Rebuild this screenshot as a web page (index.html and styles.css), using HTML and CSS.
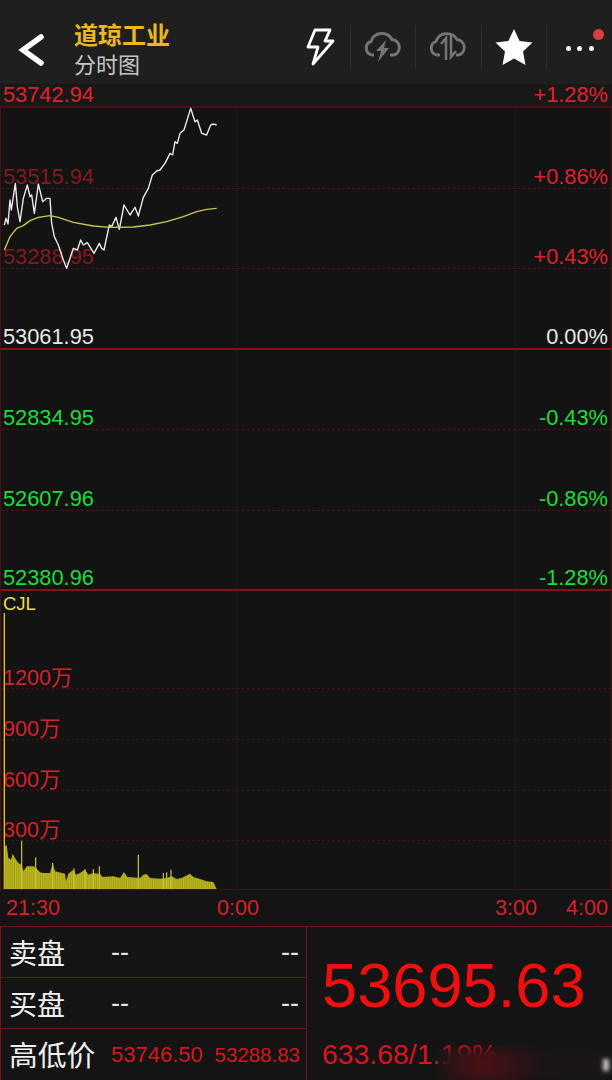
FILE: index.html
```html
<!DOCTYPE html>
<html lang="zh">
<head>
<meta charset="utf-8">
<title>道琼工业 分时图</title>
<link rel="stylesheet" href="styles.css">
</head>
<body>
<div class="app">
  <header class="topbar">
    <div class="back">
      <svg width="30" height="36" viewBox="0 0 30 36"><path d="M24 5 L6 18 L24 31" fill="none" stroke="#fff" stroke-width="5.5" stroke-linecap="round" stroke-linejoin="miter"/></svg>
    </div>
    <div class="title">
      <div class="title-main">道琼工业</div>
      <div class="title-sub">分时图</div>
    </div>
    <div class="tools">
      <div class="tool">
        <svg width="30" height="40" viewBox="0 0 30 40"><path d="M10 3 H25 L20 14 H28 L8 37 L13 20 H3 Z" fill="none" stroke="#fff" stroke-width="2.8" stroke-linejoin="round"/></svg>
      </div>
      <div class="tool">
        <svg width="40" height="32" viewBox="0 0 40 32"><path d="M11 24 H9 A7 7 0 0 1 8 10.5 A11.5 11.5 0 0 1 29 8.5 A8 8 0 0 1 31 24 H27" fill="none" stroke="#747474" stroke-width="3"/><path d="M23 9 L13 20 H18 L15 31 L26 17 H21 Z" fill="#747474"/></svg>
      </div>
      <div class="tool">
        <svg width="40" height="32" viewBox="0 0 40 32"><path d="M12 24 H9 A7 7 0 0 1 8 10.5 A11.5 11.5 0 0 1 29 8.5 A8 8 0 0 1 31 24 H28" fill="none" stroke="#747474" stroke-width="2.8"/><path d="M18 29 V7 L13 13 M23 3 V26 L28 20" fill="none" stroke="#747474" stroke-width="2.6"/></svg>
      </div>
      <div class="tool">
        <svg width="38" height="36" viewBox="0 0 38 36"><path d="M19 0 L24.6 12 L37.5 13.6 L28 22.6 L30.5 36 L19 29.5 L7.5 36 L10 22.6 L0.5 13.6 L13.4 12 Z" fill="#fff"/></svg>
      </div>
      <div class="tool tool-more">
        <span class="dot"></span><span class="dot"></span><span class="dot"></span>
        <span class="badge"></span>
      </div>
    </div>
  </header>

  <section class="price-chart">
    <div class="row row-top up"><span>53742.94</span><span>+1.28%</span></div>
    <div class="row"><span class="dim">53515.94</span><span class="up">+0.86%</span></div>
    <div class="row"><span class="dim">53288.95</span><span class="up">+0.43%</span></div>
    <div class="row row-zero"><span>53061.95</span><span>0.00%</span></div>
    <div class="row down"><span>52834.95</span><span>-0.43%</span></div>
    <div class="row down"><span>52607.96</span><span>-0.86%</span></div>
    <div class="row row-last down"><span>52380.96</span><span>-1.28%</span></div>
    <svg class="trace" width="240" height="180" viewBox="0 0 720 540">
      <polyline class="trace-price" points="13,375 18,355 24,372 30,300 34,330 40,290 46,250 52,320 60,365 70,295 82,255 90,290 95,285 103,340 115,252 128,305 140,295 150,295 155,370 163,410 175,435 190,480 200,505 220,445 232,450 242,420 250,435 262,428 282,460 298,430 305,445 312,450 328,375 335,380 348,352 358,388 372,315 390,345 405,322 415,348 430,292 445,265 457,225 470,213 480,210 495,190 510,160 518,165 525,125 532,130 540,100 552,90 572,25 585,65 592,60 605,100 620,105 632,75 640,72 650,75"/>
      <polyline class="trace-avg" points="13,450 30,410 50,385 70,377 90,362 115,352 150,347 175,352 220,367 280,378 330,382 400,381 450,375 500,365 550,350 590,335 620,328 650,325"/>
    </svg>
    <div class="vline vline-a"></div>
    <div class="vline vline-b"></div>
  </section>

  <section class="volume-chart">
    <div class="vol-name">CJL</div>
    <div class="vol-row"><span>1200万</span></div>
    <div class="vol-row"><span>900万</span></div>
    <div class="vol-row"><span>600万</span></div>
    <div class="vol-row"><span>300万</span></div>
    <svg class="bars" width="240" height="278" viewBox="0 96 720 834">
      <defs>
        <pattern id="stripes" width="5.6" height="10" patternUnits="userSpaceOnUse">
          <rect width="5.6" height="10" fill="#8f8c17"/>
          <rect width="4" height="10" fill="#bdb81c"/>
        </pattern>
      </defs>
      <path class="bars-first" d="M13 96 V924"/>
      <polygon fill="url(#stripes)" points="12,924 15,796 20,791 25,831 33,836 38,818 45,831 55,846 65,851 70,871 80,856 100,856 108,861 120,874 130,876 150,876 158,846 165,871 195,878 198,901 205,878 220,866 228,881 240,876 255,866 265,881 280,876 300,879 308,888 340,886 360,891 372,873 382,888 420,891 430,881 440,879 450,891 480,893 500,891 515,886 530,894 545,891 570,878 580,888 600,894 620,901 640,903 650,924"/>
      <path class="bars-spike" d="M65 924 V779 M107 924 V829 M298 924 V856 M415 924 V821 M513 924 V866 M280 924 V864 M255 924 V864 M490 924 V876 M500 924 V874 M158 924 V846 M222 924 V862"/>
    </svg>
    <div class="vline vline-a"></div>
    <div class="vline vline-b"></div>
  </section>

  <div class="time-axis">
    <span class="t-a">21:30</span>
    <span class="t-b">0:00</span>
    <span class="t-c">3:00</span>
    <span class="t-d">4:00</span>
  </div>

  <section class="quote">
    <div class="book">
      <div class="book-row">
        <span class="book-label">卖盘</span>
        <span class="book-val">--</span>
        <span class="book-val book-end">--</span>
      </div>
      <div class="book-row">
        <span class="book-label">买盘</span>
        <span class="book-val">--</span>
        <span class="book-val book-end">--</span>
      </div>
      <div class="book-row book-row-last">
        <span class="book-label book-label-wide">高低价</span>
        <span class="book-num">53746.50</span>
        <span class="book-num book-num-low book-end">53288.83</span>
      </div>
    </div>
    <div class="last">
      <div class="last-price">53695.63</div>
      <div class="last-change">633.68/1.19%</div>
      <div class="smudge"></div>
      <div class="mark"></div>
    </div>
  </section>
</div>
</body>
</html>
```
FILE: styles.css
```css
* { box-sizing: border-box; margin: 0; padding: 0; }
html, body { background: #141414; }
body { width: 612px; height: 1080px; overflow: hidden; font-family: "Liberation Sans", "Noto Sans CJK SC", sans-serif; }
.app { width: 612px; height: 1080px; display: flex; flex-direction: column; position: relative; }

.topbar { height: 84px; background: #1f1f1f; display: flex; align-items: center; }
.back { width: 74px; padding: 16px 0 0 17px; display: flex; }
.title { flex: 1; padding-top: 12px; }
.title-main { font-size: 24px; line-height: 30px; font-weight: 700; color: #ecb820; font-family: "Noto Sans CJK SC", sans-serif; }
.title-sub { font-size: 22px; line-height: 28px; color: #c4c4c4; font-family: "Noto Sans CJK SC", sans-serif; }
.tools { display: flex; height: 44px; margin-top: 10px; }
.tool { width: 65.5px; display: flex; align-items: center; justify-content: center; border-left: 1px solid #2c2c2c; }
.tool:first-child { border-left: 0; width: 60px; }
.tool-more { position: relative; gap: 6.5px; width: 66px; padding-top: 2px; }
.dot { width: 5px; height: 5px; border-radius: 50%; background: #fff; }
.badge { position: absolute; top: 4px; right: 8px; width: 11px; height: 11px; border-radius: 50%; background: #dc3c3c; }

.price-chart { position: relative; height: 507px; background: #131313; display: flex; flex-direction: column; border-left: 1px solid #4a1216; border-right: 1px solid #4a1216; }
.row { height: 80.5px; padding: 0 3px 1px 2px; display: flex; justify-content: space-between; align-items: flex-end; font-size: 21.8px; line-height: 20px; border-bottom: 1px dashed #4a1518; }
.row-top { height: 24px; background: #181818; margin: 0 -1px; padding-left: 3px; padding-right: 4px; border-bottom: 2px solid #500d12; }
.row-zero { border-bottom: 2px solid #8c0f16; color: #e8e8e8; }
.row-last { border-bottom: 2px solid #8c0f16; }
.up { color: #e0212b; }
.dim { color: #84181e; }
.down { color: #1edc3c; }
.trace { position: absolute; left: -1px; top: 16px; }
.trace polyline { fill: none; stroke-linejoin: round; }
.trace-price { stroke: #e8e8e8; stroke-width: 4.2; }
.trace-avg { stroke: #c8c850; stroke-width: 4.2; }
.vline { position: absolute; top: 24px; bottom: 0; width: 0; border-left: 1px dotted #2f1a1a; }
.vline-a { left: 235px; }
.vline-b { left: 514px; }

.volume-chart { position: relative; height: 299px; background: #131313; display: flex; flex-direction: column; border-left: 1px solid #4a1216; border-right: 1px solid #4a1216; border-bottom: 1px solid #3c1518; }
.volume-chart .vline { top: 0; }
.vol-name { height: 24px; padding-left: 2px; font-size: 18.5px; line-height: 25px; color: #e8dc50; }
.vol-row { height: 50.8px; padding: 0 0 0 2px; display: flex; align-items: flex-end; font-size: 21.6px; line-height: 21px; color: #d8202a; border-bottom: 1px dashed #3c1518; }
.vol-row:nth-child(2) { height: 74px; }
.bars { position: absolute; left: -1px; top: 22px; }
.bars-first { stroke: #e3c02a; stroke-width: 4; fill: none; }
.bars-spike { stroke: #c8c63c; stroke-width: 3.6; fill: none; }

.time-axis { height: 36px; background: #141414; position: relative; font-size: 21.6px; color: #d8202a; line-height: 36px; }
.time-axis span { position: absolute; top: 0; }
.t-a { left: 6px; }
.t-b { left: 217px; }
.t-c { left: 495px; }
.t-d { left: 566px; }

.quote { flex: 1; display: flex; background: #141414; border-top: 1px solid #7a1018; border-left: 1px solid #7a1018; }
.book { width: 306px; border-right: 1px solid #7a1018; display: flex; flex-direction: column; }
.book-row { height: 51px; border-bottom: 1px solid #7a1018; display: flex; align-items: center; padding: 0 7px 0 8px; }
.book-row-last { flex: 1; border-bottom: 0; }
.book-label { width: 102px; font-size: 28px; color: #f0f0f0; font-family: "Noto Sans CJK SC", sans-serif; line-height: 40px; }
.book-label-wide { font-size: 28.8px; white-space: nowrap; line-height: 36px; padding-bottom: 2px; }
.book-val { font-size: 27px; color: #e4e4e4; line-height: 30px; }
.book-end { margin-left: auto; }
.book-num { font-size: 22px; color: #d8141e; line-height: 26px; }
.book-num-low { font-size: 20.5px; margin-right: -1px; }
.last { flex: 1; position: relative; padding: 25px 0 0 15px; }
.last-price { font-size: 63.2px; line-height: 66px; color: #f00f0f; }
.last-change { margin-top: 20px; font-size: 28.4px; line-height: 32px; color: #d8141e; white-space: nowrap; }
.smudge { position: absolute; left: 135px; top: 122px; width: 170px; height: 32px; background: radial-gradient(circle at 25% 50%, #4a1014 0, #1a1516 45%, #1a1718 100%); filter: blur(5px); }
.mark { position: absolute; right: 3px; top: 132px; width: 6px; height: 12px; background: #c8c8c8; filter: blur(2px); }
```
